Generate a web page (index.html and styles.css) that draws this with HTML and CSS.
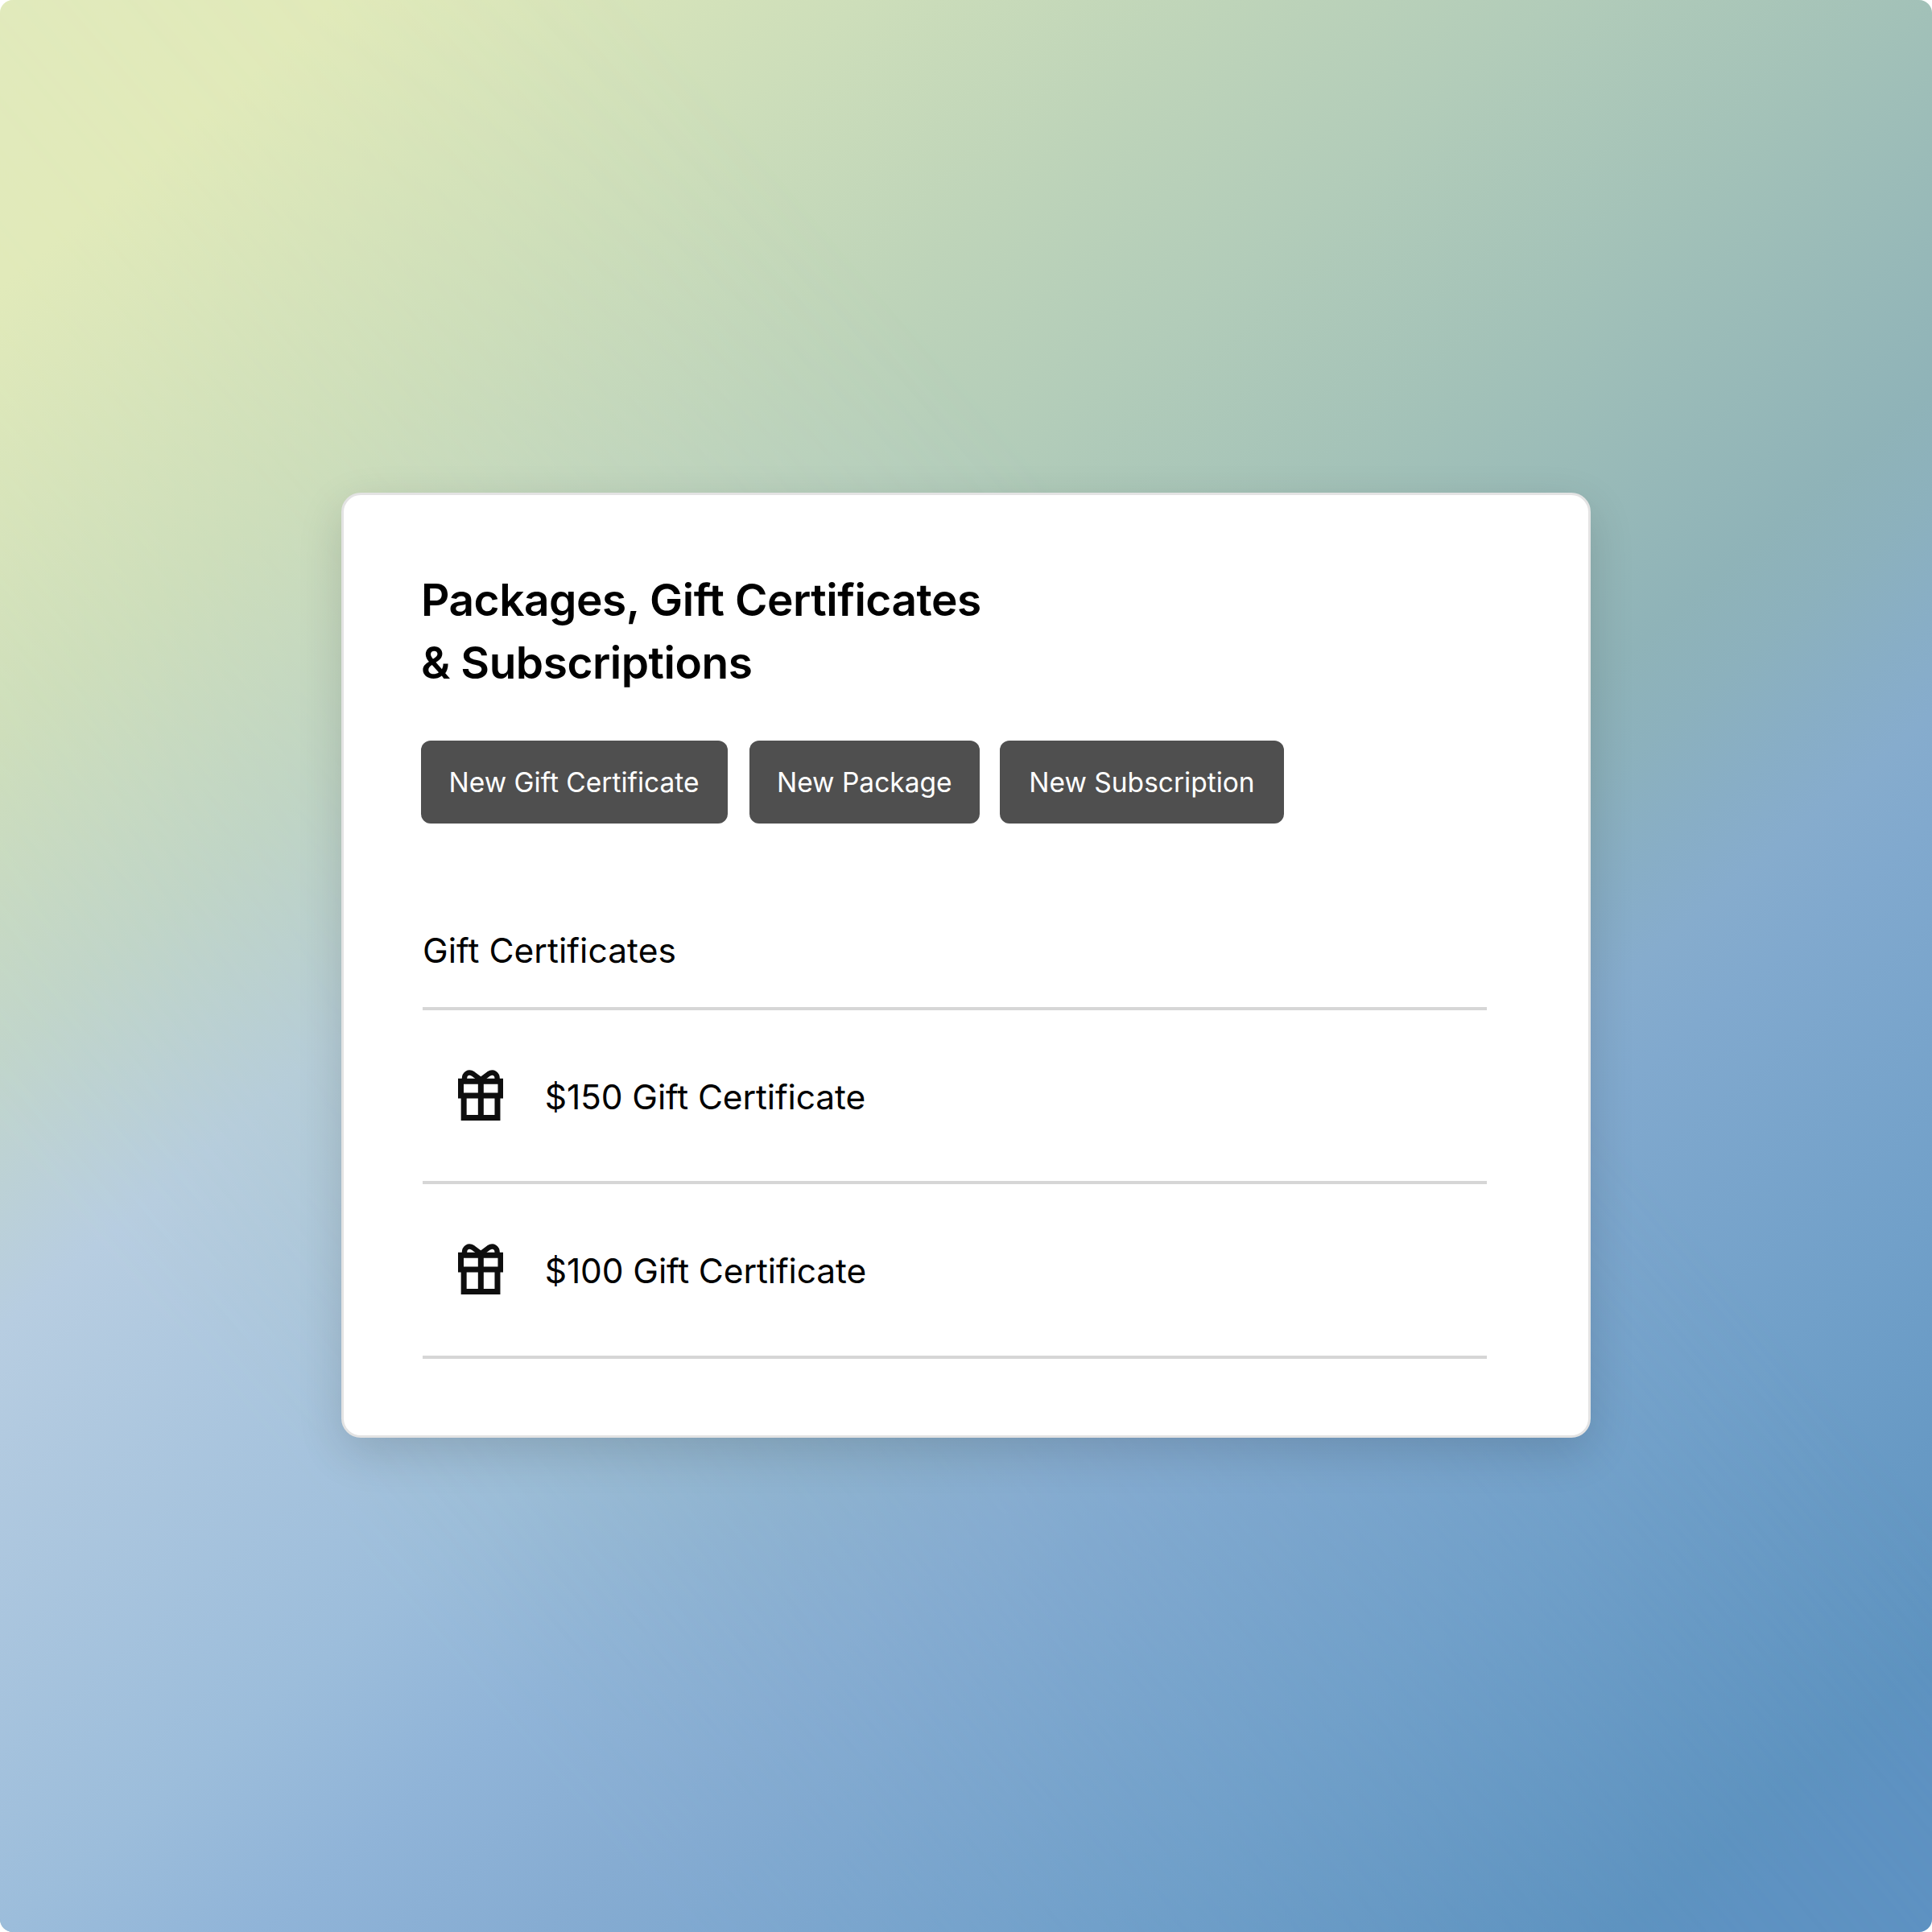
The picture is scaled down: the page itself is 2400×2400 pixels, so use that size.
FILE: index.html
```html
<!DOCTYPE html>
<html lang="en">
<head>
<meta charset="utf-8">
<title>Packages, Gift Certificates &amp; Subscriptions</title>
<link rel="stylesheet" href="styles.css">
</head>
<body>
<svg class="sprite" aria-hidden="true">
  <symbol id="gift" viewBox="88 84 169 190">
    <path d="M98.500 127H247V180H98.500ZM109.500 180H235V262.500H109.500ZM173 127V262" fill="none" stroke="#0e0e0e" stroke-width="21"/>
    <path d="M112 124C109 96 129 89 144 99L173 121L202 99C217 89 237 96 234 124" fill="none" stroke="#0e0e0e" stroke-width="19"/>
  </symbol>
</svg>
<main class="stage">
  <section class="card">
    <h1 class="title">Packages, Gift Certificates<br>&amp; Subscriptions</h1>
    <div class="actions">
      <button class="button gift">New Gift Certificate</button>
      <button class="button package">New Package</button>
      <button class="button subscription">New Subscription</button>
    </div>
    <h2 class="subtitle">Gift Certificates</h2>
    <ul class="list">
      <li class="row"><svg class="icon"><use href="#gift"/></svg><span>$150 Gift Certificate</span></li>
      <li class="row"><svg class="icon"><use href="#gift"/></svg><span>$100 Gift Certificate</span></li>
    </ul>
  </section>
</main>
</body>
</html>
```
FILE: styles.css
```css
* { box-sizing: border-box; }
body { margin: 0; background: #fff; font-family: Inter, "Liberation Sans", sans-serif; color: #000; }
.sprite { display: none; }
.stage {
  position: relative;
  isolation: isolate;
  width: 2400px;
  height: 2400px;
  display: flex;
  justify-content: center;
  align-items: flex-start;
  padding-top: 612px;
  border-radius: 16px;
  overflow: hidden;
  background: linear-gradient(139.5deg, rgb(225 234 188) 0%, rgb(225 234 186) 8%, rgb(205 222 186) 20.6%, rgb(190 212 185) 29.4%, rgb(178 204 185) 37.1%, rgb(162 193 184) 46.1%, rgb(143 179 184) 57%, rgb(140 177 189) 60%, rgb(136 174 198) 63.3%, rgb(134 172 205) 66%, rgb(129 169 206) 69%, rgb(113 160 201) 80%, rgb(94 147 192) 92.5%, #5e92c2 95%);
}
/* Cooler tint that fades out from the lower left */
.stage::before {
  content: "";
  position: absolute;
  inset: 0;
  z-index: -1;
  background: linear-gradient(139.5deg, rgb(225 234 188) 0%, rgb(225 234 186) 8%, rgb(206 222 188) 20.6%, rgb(193 213 203) 29.4%, rgb(183 205 225) 37.1%, rgb(156 189 219) 54%, rgb(144 180 216) 60%, rgb(134 172 210) 66.7%, rgb(113 160 202) 80%, rgb(94 147 192) 92.5%, #5e92c2 95%);
  mask-image: linear-gradient(49.5deg, #000 19%, transparent 64%);
}
.card {
  width: 1552px;
  height: 1174px;
  padding: 90.5px 126px 0 97px;
  background: #fff;
  border: 3px solid #e3e3e3;
  border-radius: 24px;
  box-shadow: 0 18px 56px rgba(0, 0, 0, .14);
}
.title { margin: 0 0 0 -1px; font-size: 55px; line-height: 78px; font-weight: 600; letter-spacing: -.48px; white-space: nowrap; }
.actions { display: flex; margin: 58.5px 0 0 -1.5px; }
.button {
  height: 103px;
  padding: 0;
  border: 0;
  border-radius: 12px;
  background: #4f4f4f;
  color: #fff;
  font: 400 33.5px Inter, "Liberation Sans", sans-serif;
  white-space: nowrap;
}
.gift { width: 381px; margin-right: 27px; }
.package { width: 286.5px; margin-right: 25px; }
.subscription { width: 353px; }
.subtitle { margin: 131.5px 0 0 1px; font-size: 42.5px; line-height: 52px; font-weight: 400; letter-spacing: .05px; }
.list { list-style: none; margin: 44.5px 0 0 .5px; padding: 0; border-top: 4px solid #d6d6d6; }
.row { display: flex; align-items: center; height: 216.3px; padding: 2px 0 0 44px; border-bottom: 4px solid #d6d6d6; font-size: 42.5px; letter-spacing: -.12px; }
.icon { width: 56.3px; height: 63.3px; margin: 0 52px 4px 0; }
```
